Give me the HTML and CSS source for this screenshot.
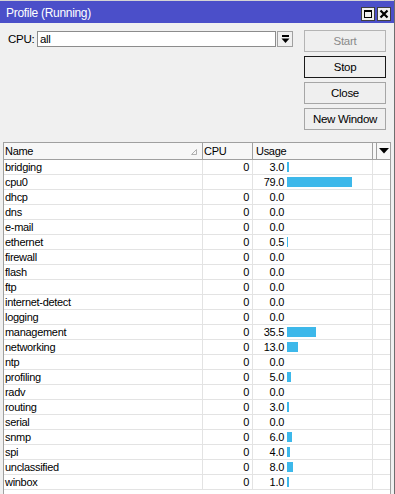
FILE: index.html
```html
<!DOCTYPE html>
<html>
<head>
<meta charset="utf-8">
<link rel="stylesheet" href="styles.css">
</head>
<body>
<div class="window">
  <div class="titlebar">
    <span class="title">Profile (Running)</span>
    <div class="tbtns">
      <span class="tbtn"><span class="maxsq"></span></span>
      <span class="tbtn"><svg width="10" height="10" viewBox="0 0 10 10"><path d="M1.5 1.5 L8.5 8.5 M8.5 1.5 L1.5 8.5" stroke="#000" stroke-width="2.2" fill="none"/></svg></span>
    </div>
  </div>
  <div class="top">
    <div class="cpu-row">
      <span class="label">CPU:</span>
      <div class="input">all</div>
      <div class="ddbtn"><svg width="9" height="9" viewBox="0 0 9 9"><rect x="1" y="0" width="7" height="2" fill="#000"/><path d="M0.5 3.5 H8.5 L4.5 8 Z" fill="#000"/></svg></div>
    </div>
    <div class="btns">
      <div class="btn disabled">Start</div>
      <div class="btn default">Stop</div>
      <div class="btn">Close</div>
      <div class="btn">New Window</div>
    </div>
  </div>
  <div class="table">
    <div class="row head">
      <div class="c name">Name<svg class="sort" width="6" height="6" viewBox="0 0 6 6"><path d="M0.5 5.5 H5.5 V0.5 Z" fill="none" stroke="#b0b0b0" stroke-width="1"/></svg></div>
      <div class="c cpu">CPU</div>
      <div class="c usage">Usage</div>
      <div class="c menu"><div class="menubtn"><svg width="10" height="6" viewBox="0 0 10 6"><path d="M0 0 H10 L5 5.5 Z" fill="#000"/></svg></div></div>
    </div>
    <div class="row"><div class="c name">bridging</div><div class="c cpu">0</div><div class="c usage"><span class="val">3.0</span><span class="bar" style="width:2px"></span></div><div class="c menu"></div></div>
    <div class="row"><div class="c name">cpu0</div><div class="c cpu"></div><div class="c usage"><span class="val">79.0</span><span class="bar" style="width:65px"></span></div><div class="c menu"></div></div>
    <div class="row"><div class="c name">dhcp</div><div class="c cpu">0</div><div class="c usage"><span class="val">0.0</span></div><div class="c menu"></div></div>
    <div class="row"><div class="c name">dns</div><div class="c cpu">0</div><div class="c usage"><span class="val">0.0</span></div><div class="c menu"></div></div>
    <div class="row"><div class="c name">e-mail</div><div class="c cpu">0</div><div class="c usage"><span class="val">0.0</span></div><div class="c menu"></div></div>
    <div class="row"><div class="c name">ethernet</div><div class="c cpu">0</div><div class="c usage"><span class="val">0.5</span><span class="bar" style="width:1px"></span></div><div class="c menu"></div></div>
    <div class="row"><div class="c name">firewall</div><div class="c cpu">0</div><div class="c usage"><span class="val">0.0</span></div><div class="c menu"></div></div>
    <div class="row"><div class="c name">flash</div><div class="c cpu">0</div><div class="c usage"><span class="val">0.0</span></div><div class="c menu"></div></div>
    <div class="row"><div class="c name">ftp</div><div class="c cpu">0</div><div class="c usage"><span class="val">0.0</span></div><div class="c menu"></div></div>
    <div class="row"><div class="c name">internet-detect</div><div class="c cpu">0</div><div class="c usage"><span class="val">0.0</span></div><div class="c menu"></div></div>
    <div class="row"><div class="c name">logging</div><div class="c cpu">0</div><div class="c usage"><span class="val">0.0</span></div><div class="c menu"></div></div>
    <div class="row"><div class="c name">management</div><div class="c cpu">0</div><div class="c usage"><span class="val">35.5</span><span class="bar" style="width:29px"></span></div><div class="c menu"></div></div>
    <div class="row"><div class="c name">networking</div><div class="c cpu">0</div><div class="c usage"><span class="val">13.0</span><span class="bar" style="width:11px"></span></div><div class="c menu"></div></div>
    <div class="row"><div class="c name">ntp</div><div class="c cpu">0</div><div class="c usage"><span class="val">0.0</span></div><div class="c menu"></div></div>
    <div class="row"><div class="c name">profiling</div><div class="c cpu">0</div><div class="c usage"><span class="val">5.0</span><span class="bar" style="width:4px"></span></div><div class="c menu"></div></div>
    <div class="row"><div class="c name">radv</div><div class="c cpu">0</div><div class="c usage"><span class="val">0.0</span></div><div class="c menu"></div></div>
    <div class="row"><div class="c name">routing</div><div class="c cpu">0</div><div class="c usage"><span class="val">3.0</span><span class="bar" style="width:2px"></span></div><div class="c menu"></div></div>
    <div class="row"><div class="c name">serial</div><div class="c cpu">0</div><div class="c usage"><span class="val">0.0</span></div><div class="c menu"></div></div>
    <div class="row"><div class="c name">snmp</div><div class="c cpu">0</div><div class="c usage"><span class="val">6.0</span><span class="bar" style="width:5px"></span></div><div class="c menu"></div></div>
    <div class="row"><div class="c name">spi</div><div class="c cpu">0</div><div class="c usage"><span class="val">4.0</span><span class="bar" style="width:3px"></span></div><div class="c menu"></div></div>
    <div class="row"><div class="c name">unclassified</div><div class="c cpu">0</div><div class="c usage"><span class="val">8.0</span><span class="bar" style="width:6px"></span></div><div class="c menu"></div></div>
    <div class="row"><div class="c name">winbox</div><div class="c cpu">0</div><div class="c usage"><span class="val">1.0</span><span class="bar" style="width:2px"></span></div><div class="c menu"></div></div>
  </div>
</div>
</body>
</html>
```

FILE: styles.css
```css
html, body {
  margin: 0;
  padding: 0;
  background: #f0f0f0;
}
body {
  width: 395px;
  height: 494px;
  overflow: hidden;
  font-family: "Liberation Sans", Arial, sans-serif;
  font-size: 11px;
  letter-spacing: -0.3px;
  color: #000;
}
.window {
  width: 395px;
  height: 494px;
  box-sizing: border-box;
  border-right: 1px solid #6e6e6e;
  background: #f0f0f0;
}
.titlebar {
  height: 23px;
  box-sizing: border-box;
  border-top: 1px solid #d4d4d4;
  background: #4b4fc9;
  display: flex;
  align-items: center;
  justify-content: space-between;
  padding: 0 3px 0 6px;
}
.title {
  color: #fff;
  font-size: 12px;
  letter-spacing: -0.3px;
  margin-top: 1px;
}
.tbtns {
  display: flex;
  gap: 2px;
  margin-top: 3px;
}
.tbtn {
  width: 14px;
  height: 14px;
  box-sizing: border-box;
  border: 1px solid #404040;
  background: #efefef;
  display: flex;
  align-items: center;
  justify-content: center;
}
.maxsq {
  width: 8px;
  height: 8px;
  box-sizing: border-box;
  border: 1px solid #000;
  border-top-width: 2px;
}
.top {
  height: 119px;
  display: flex;
  padding: 7px 0 0 8px;
  box-sizing: border-box;
}
.cpu-row {
  display: flex;
  align-items: center;
  margin-top: 1px;
  height: 16px;
}
.label {
  width: 29px;
  font-size: 11.5px;
}
.input {
  width: 239px;
  height: 16px;
  box-sizing: border-box;
  border: 1px solid #8c8c8c;
  background: #fff;
  padding-left: 2px;
  line-height: 14px;
  font-size: 11.5px;
}
.ddbtn {
  width: 16px;
  height: 16px;
  box-sizing: border-box;
  margin-left: 1px;
  border: 1px solid #a0a0a0;
  background: #f0f0f0;
  display: flex;
  align-items: center;
  justify-content: center;
}
.btns {
  margin-left: 11px;
  display: flex;
  flex-direction: column;
  gap: 4px;
}
.btn {
  width: 82px;
  height: 22px;
  box-sizing: border-box;
  border: 1px solid #a6a6a6;
  background: #efefef;
  display: flex;
  align-items: center;
  justify-content: center;
  font-size: 11.5px;
}
.btn.disabled {
  color: #8a8a8a;
  border-color: #b4b4b4;
}
.btn.default {
  border-color: #1a1a1a;
}
.table {
  margin: 0 0 0 3px;
  width: 388px;
  box-sizing: border-box;
  border-left: 1px solid #a0a0a0;
  border-right: 1px solid #a0a0a0;
  background: #fff;
  height: 352px;
}
.row {
  display: grid;
  grid-template-columns: 199px 50px 120px 17px;
  height: 15px;
  box-sizing: border-box;
  border-bottom: 1px solid #e3e3e3;
  line-height: 14px;
}
.row.head {
  height: 18px;
  border-top: 1px solid #a0a0a0;
  border-bottom: 1px solid #a0a0a0;
  background: #f7f7f7;
  line-height: 16px;
}
.c {
  box-sizing: border-box;
  border-right: 1px solid #e3e3e3;
  white-space: nowrap;
  overflow: hidden;
}
.head .c {
  border-right-color: #a0a0a0;
}
.c.name {
  padding-left: 1px;
  position: relative;
}
.sort {
  position: absolute;
  right: 5px;
  top: 6px;
}
.c.cpu {
  text-align: right;
  padding-right: 3px;
}
.head .c.cpu {
  text-align: left;
  padding-left: 1px;
}
.c.usage {
  display: flex;
  align-items: center;
}
.head .c.usage {
  padding-left: 3px;
}
.c.menu {
  border-right: none;
}
.head .c.menu {
  padding-left: 3px;
}
.menubtn {
  height: 16px;
  border-left: 1px solid #a0a0a0;
  display: flex;
  align-items: center;
  justify-content: center;
  padding-left: 1px;
}
.val {
  width: 31px;
  text-align: right;
  flex: none;
}
.bar {
  height: 10px;
  margin-left: 3px;
  background: #3db8ea;
  flex: none;
}
```
